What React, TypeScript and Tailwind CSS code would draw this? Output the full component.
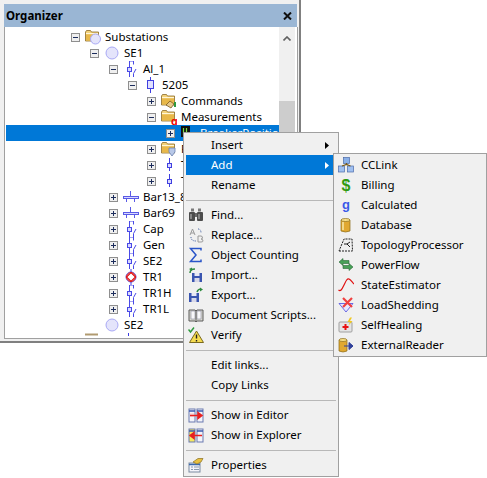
import type { ReactNode } from 'react';

const font = "[font-family:'Noto_Sans',sans-serif]";

function Ico({ children }: { children: ReactNode }) {
  return (
    <svg width="16" height="16" viewBox="0 0 16 16" className="shrink-0">
      {children}
    </svg>
  );
}

// tree icons
const Folder = () => (
  <>
    <path d="M0.5 3 L1.5 1.5 H5.5 L6.5 3 H13.5 V12 H0.5 Z" fill="#f3d27a" stroke="#8a6a28" strokeWidth="0.8" />
    <path d="M1 5.5 H13 V11.5 H1 Z" fill="#e8b84a" />
    <path d="M1 4.5 H13" stroke="#fff6d8" />
  </>
);
const Circle = ({ r = 6 }: { r?: number }) => (
  <circle cx="8" cy="8" r={r} fill="#e4e4fb" stroke="#a9a9f5" strokeWidth="1" />
);
const SwitchIcon = () => (
  <Ico>
    <path d="M6.5 0 H10.5 V3.5 M6.5 0 V6 M6.5 10 V16 M10.5 16 V12.5 L13 8" fill="none" stroke="#4a4ae6" strokeWidth="1" />
    <rect x="4.5" y="6.5" width="4" height="4" fill="#d8d8ff" stroke="#4a4ae6" />
  </Ico>
);
const BarIcon = () => (
  <Ico>
    <path d="M7.5 2 V7 M3.5 10 V13 M11.5 10 V13" stroke="#5a5ae6" fill="none" />
    <rect x="0.5" y="7.5" width="15" height="2" fill="#d8d8ff" stroke="#5a5ae6" strokeWidth="1" />
  </Ico>
);
const Stub = () => (
  <Ico>
    <path d="M8.5 1 V6 M8.5 10 V14" stroke="#4040e0" />
    <rect x="6.5" y="6.5" width="4" height="4" fill="#d8d8ff" stroke="#4040e0" />
  </Ico>
);

type Row = { pl: string; icon: ReactNode; label: string; open?: boolean; noBox?: boolean; sel?: boolean };

const rows: Row[] = [
  { pl: 'pl-[65px]', open: true, label: 'Substations', icon: <Ico><Folder /><circle cx="10.5" cy="10" r="5" fill="#e4e4fb" stroke="#a9a9f5" /></Ico> },
  { pl: 'pl-[84px]', open: true, label: 'SE1', icon: <Ico><Circle /></Ico> },
  { pl: 'pl-[103px]', open: true, label: 'Al_1', icon: <SwitchIcon /> },
  { pl: 'pl-[122px]', open: true, label: '5205', icon: <Ico><path d="M8.5 0 V3 M8.5 12 V16" stroke="#4040e0" /><rect x="5.5" y="3.5" width="6" height="8" fill="#e0e0ff" stroke="#4040e0" /></Ico> },
  { pl: 'pl-[141px]', label: 'Commands', icon: <Ico><Folder /><path d="M5 12 L9 8 L13 11 L10 15 Z" fill="#e8c88a" stroke="#7a5a20" strokeWidth="0.8" /><path d="M14 9 V14" stroke="#2f9a3f" strokeWidth="2" /></Ico> },
  { pl: 'pl-[141px]', open: true, label: 'Measurements', icon: <Ico><Folder /><text x="10" y="16" fontSize="11" fontWeight="700" fill="#f00000" fontFamily="Liberation Sans">g</text></Ico> },
  { pl: 'pl-[160px]', sel: true, label: 'BreakerPosition', icon: <Ico><rect x="1" y="1" width="9" height="11" fill="#101010" /><path d="M3.5 3 V10 M6.5 3 V10" stroke="#7de040" strokeWidth="1.2" /><path d="M11 8 H15" stroke="#f00000" strokeWidth="2" /></Ico> },
  { pl: 'pl-[141px]', label: 'F', icon: <Ico><Folder /><path d="M8 7 H14 V11 L11 15 L8 11 Z" fill="#b8c8e8" stroke="#6a80b0" strokeWidth="0.8" /></Ico> },
  { pl: 'pl-[141px]', label: 'T', icon: <Stub /> },
  { pl: 'pl-[141px]', label: 'T', icon: <Stub /> },
  { pl: 'pl-[103px]', label: 'Bar13_8', icon: <BarIcon /> },
  { pl: 'pl-[103px]', label: 'Bar69', icon: <BarIcon /> },
  { pl: 'pl-[103px]', label: 'Cap', icon: <SwitchIcon /> },
  { pl: 'pl-[103px]', label: 'Gen', icon: <SwitchIcon /> },
  { pl: 'pl-[103px]', label: 'SE2', icon: <SwitchIcon /> },
  { pl: 'pl-[103px]', label: 'TR1', icon: <Ico><path d="M8 0 V3 M8 13 V16" stroke="#3c3ce0" /><circle cx="8" cy="8" r="5" fill="#fff" stroke="#3c3ce0" strokeWidth="0.8" /><path d="M8 3.5 L12.5 8 L8 12.5 L3.5 8 Z" fill="none" stroke="#e01010" strokeWidth="1.2" /><circle cx="8" cy="8" r="4.5" fill="none" stroke="#e01010" strokeWidth="0.8" /></Ico> },
  { pl: 'pl-[103px]', label: 'TR1H', icon: <SwitchIcon /> },
  { pl: 'pl-[103px]', label: 'TR1L', icon: <SwitchIcon /> },
  { pl: 'pl-[84px]', noBox: true, label: 'SE2', icon: <Ico><Circle /></Ico> },
];

function Expander({ open }: { open?: boolean }) {
  return (
    <svg width="9" height="9" viewBox="0 0 9 9" className="shrink-0">
      <rect x="0.5" y="0.5" width="8" height="8" fill="#efefef" stroke="#8f8f8f" />
      <path d={open ? 'M2 4.5 H7' : 'M2 4.5 H7 M4.5 2 V7'} stroke="#1c2c5c" />
    </svg>
  );
}

function TreeRow({ row }: { row: Row }) {
  return (
    <div className={`h-4 shrink-0 flex items-center ${row.pl} ${row.sel ? 'bg-[#0078d7] text-white' : 'text-black'}`}>
      {row.noBox ? <span className="w-[9px] shrink-0" /> : <Expander open={row.open} />}
      <span className="ml-[5px]">{row.icon}</span>
      <span className="ml-1 whitespace-nowrap">{row.label}</span>
    </div>
  );
}

// menu icons
const icons: Record<string, ReactNode> = {
  find: <Ico><rect x="3" y="1.5" width="3" height="3" fill="#7a7a7a" /><rect x="10" y="1.5" width="3" height="3" fill="#7a7a7a" /><rect x="1" y="5" width="6" height="9" rx="1" fill="#4c4c4c" /><rect x="9" y="5" width="6" height="9" rx="1" fill="#4c4c4c" /><rect x="7" y="6" width="2" height="4" fill="#6a6a6a" /><path d="M3 7 V12 M11 7 V12" stroke="#c0c0c0" /></Ico>,
  replace: <Ico><path d="M2 8 L4.5 2 L7 8 M3 6 H6" fill="none" stroke="#9a9a9a" /><path d="M10 9 H13 Q14.5 9 14.5 11 Q14.5 12 13 12 Q15 12 15 14 Q15 15 13 15 H10 Z" fill="none" stroke="#9a9a9a" /><path d="M3 10 Q3 14 8 14 M10 2 Q13 2 13 6" fill="none" stroke="#3a5aa0" strokeDasharray="1 1" /></Ico>,
  sigma: <Ico><path d="M13 3.5 V1.5 H2.5 L8 8 L2.5 14.5 H13 V12.5" fill="none" stroke="#2a55c8" strokeWidth="1.5" /></Ico>,
  import: <Ico><path d="M4 6 H14 V15 H4 Z" fill="#3a55b0" /><rect x="6.5" y="6" width="5" height="3" fill="#e8e8f4" /><rect x="6.5" y="11" width="5" height="4" fill="#d8d8e8" /><path d="M2 6 Q2 2 7 2" fill="none" stroke="#2f8a3f" strokeWidth="1.5" /><path d="M1 2 L4 0.5 V4 Z" fill="#2f8a3f" /></Ico>,
  export: <Ico><path d="M1 6 H11 V15 H1 Z" fill="#3a55b0" /><rect x="3.5" y="6" width="5" height="3" fill="#e8e8f4" /><rect x="3.5" y="11" width="5" height="4" fill="#d8d8e8" /><path d="M9 5 Q10 2 13 2" fill="none" stroke="#2f8a3f" strokeWidth="1.5" /><path d="M12 0.5 L15 2.5 L12 4.5 Z" fill="#2f8a3f" /></Ico>,
  book: <Ico><path d="M1 3 H7 L8 4 L9 3 H15 V14 H9 L8 15 L7 14 H1 Z" fill="#d8d8d0" stroke="#5c5c5c" /><path d="M3 4 H7 V12 H3 Z M9 4 H13 V12 H9 Z" fill="#f8f8fa" stroke="#8a8aa0" strokeWidth="0.6" /><path d="M8 4 V15" stroke="#5c5c5c" /></Ico>,
  verify: <Ico><path d="M8.5 4 L15.5 15.5 H1.5 Z" fill="#f6dc50" stroke="#7a6a20" /><path d="M8.5 7.5 V11.5 M8.5 13 V14.5" stroke="#202020" strokeWidth="1.4" /><path d="M0.5 2.5 L2.5 5 L6 0.5" fill="none" stroke="#2e9a3e" strokeWidth="1.5" /></Ico>,
  editor: <Ico><rect x="1" y="2" width="6" height="13" fill="#f4f4fa" stroke="#6a7ab0" /><rect x="9" y="2" width="6" height="13" fill="#f4f4fa" stroke="#6a7ab0" /><path d="M1 4 H7 M9 4 H15" stroke="#3a5ab0" strokeWidth="1.5" /><rect x="2" y="6" width="4" height="4" fill="#f8dada" /><path d="M2 8.5 H11 M10 5.5 L14 8.5 L10 11.5 Z" fill="#e82020" stroke="#e82020" strokeWidth="1.5" /></Ico>,
  explorer: <Ico><rect x="1" y="2" width="6" height="13" fill="#f6e860" stroke="#6a7ab0" /><rect x="9" y="2" width="6" height="13" fill="#f4f4fa" stroke="#6a7ab0" /><path d="M1 4 H7 M9 4 H15" stroke="#3a5ab0" strokeWidth="1.5" /><path d="M14 8.5 H6 M6 5.5 L2 8.5 L6 11.5 Z" fill="#e82020" stroke="#e82020" strokeWidth="1.5" /></Ico>,
  props: <Ico><rect x="1" y="6" width="11" height="9" fill="#f4f4fa" stroke="#7a8aa0" /><path d="M1 7.5 H12" stroke="#3a6ab0" strokeWidth="1.5" /><path d="M3 10 H5 M6 10 H11 M3 12.5 H5 M6 12.5 H11" stroke="#8a9ab0" /><path d="M5 5 L10 1.5 H15 L13 5 L9 7 Z" fill="#e8c040" stroke="#8a7020" strokeWidth="0.7" /></Ico>,
  cclink: <Ico><rect x="5.5" y="0.5" width="6" height="6" fill="#8ab0e8" stroke="#4a6aa8" strokeWidth="0.7" /><rect x="0.5" y="9" width="6" height="6" fill="#a0c0f0" stroke="#4a6aa8" strokeWidth="0.7" /><rect x="9.5" y="9" width="6" height="6" fill="#a0c0f0" stroke="#4a6aa8" strokeWidth="0.7" /><path d="M8.5 6 V8 M4 9 L8.5 7.5 L12.5 9" fill="none" stroke="#7a5a18" strokeWidth="1.2" /></Ico>,
  billing: <Ico><text x="8" y="14" textAnchor="middle" fontSize="16" fontWeight="700" fill="#2f9a10" fontFamily="Liberation Sans">$</text></Ico>,
  calc: <Ico><text x="8" y="12" textAnchor="middle" fontSize="13" fontWeight="700" fill="#3a5ae8" fontFamily="Liberation Sans">g</text></Ico>,
  db: <Ico><path d="M3 3 H12 V14 Q7.5 16 3 14 Z" fill="#e0a830" stroke="#8a6a18" strokeWidth="0.7" /><ellipse cx="7.5" cy="3" rx="4.5" ry="1.5" fill="#f8e088" stroke="#8a6a18" strokeWidth="0.7" /><path d="M5 5 V13" stroke="#f8e8a8" strokeWidth="1.5" /></Ico>,
  topo: <Ico><path d="M1 14 H14.5 L14 2 H6 Z" fill="none" stroke="#202020" strokeDasharray="2 1" /><path d="M6 7 H9 L12 10 M9 7 L12 5" fill="none" stroke="#202020" /></Ico>,
  flow: <Ico><path d="M1 5 L5 1.5 V3.5 H11 V6.5 H5 V8.5 Z" fill="#48a058" stroke="#2a6a38" strokeWidth="0.6" /><path d="M15 10 L11 6.5 V8.5 H5 V11.5 H11 V13.5 Z" fill="#48a058" stroke="#2a6a38" strokeWidth="0.6" /></Ico>,
  state: <Ico><path d="M0.5 13 C3 15 4.5 11 6 8 S9 1 11 2 S14 5 16 7" fill="none" stroke="#e01010" strokeWidth="1.2" /></Ico>,
  shed: <Ico><path d="M1 6.5 H15 L8 15 Z" fill="#e8e8ff" stroke="#4a4ae0" strokeWidth="0.8" /><path d="M5 1 L14 10 M14 1 L5 10" stroke="#f04040" strokeWidth="2.2" /></Ico>,
  heal: <Ico><rect x="1" y="5" width="13" height="10" rx="1" fill="#e4e4e4" stroke="#a0a0a0" /><path d="M7.5 7 V13 M4.5 10 H10.5" stroke="#e81010" strokeWidth="2" /><path d="M12 0.5 L9.5 5 H12 L10.5 8.5 L14.5 4 H12 L14 0.5 Z" fill="#f0c820" /></Ico>,
  ext: <Ico><path d="M1 3 H9 V14 Q5 16 1 14 Z" fill="#e0a830" stroke="#8a6a18" strokeWidth="0.7" /><ellipse cx="5" cy="3" rx="4" ry="1.5" fill="#f8e088" stroke="#8a6a18" strokeWidth="0.7" /><path d="M6 9 H11 M11 5.5 L15 9 L11 12.5 Z" fill="#30409a" stroke="#30409a" /></Ico>,
};

type Item = { label?: string; icon?: string; arrow?: boolean; active?: boolean };

const mainItems: Item[] = [
  { label: 'Insert', arrow: true },
  { label: 'Add', arrow: true, active: true },
  { label: 'Rename' },
  {},
  { label: 'Find...', icon: 'find' },
  { label: 'Replace...', icon: 'replace' },
  { label: 'Object Counting', icon: 'sigma' },
  { label: 'Import...', icon: 'import' },
  { label: 'Export...', icon: 'export' },
  { label: 'Document Scripts...', icon: 'book' },
  { label: 'Verify', icon: 'verify' },
  {},
  { label: 'Edit links...' },
  { label: 'Copy Links' },
  {},
  { label: 'Show in Editor', icon: 'editor' },
  { label: 'Show in Explorer', icon: 'explorer' },
  {},
  { label: 'Properties', icon: 'props' },
];

const subItems: Item[] = [
  { label: 'CCLink', icon: 'cclink' },
  { label: 'Billing', icon: 'billing' },
  { label: 'Calculated', icon: 'calc' },
  { label: 'Database', icon: 'db' },
  { label: 'TopologyProcessor', icon: 'topo' },
  { label: 'PowerFlow', icon: 'flow' },
  { label: 'StateEstimator', icon: 'state' },
  { label: 'LoadShedding', icon: 'shed' },
  { label: 'SelfHealing', icon: 'heal' },
  { label: 'ExternalReader', icon: 'ext' },
];

function MenuRow({ item }: { item: Item }) {
  if (!item.label) {
    return (
      <div className="h-[10px] flex items-center">
        <div className="h-px w-full bg-[#b8b8b8]" />
      </div>
    );
  }
  return (
    <div className={`h-5 flex items-center pl-[2px] ${item.active ? 'bg-[#0078d7] text-white' : 'text-black'}`}>
      <span className="w-4 h-4 shrink-0">{item.icon && icons[item.icon]}</span>
      <span className="ml-[7px] whitespace-nowrap flex-1">{item.label}</span>
      {item.arrow && (
        <svg width="4" height="7" viewBox="0 0 4 7" className={`mr-[7px] ${item.active ? 'fill-white' : 'fill-black'}`}>
          <path d="M0 0 L4 3.5 L0 7 Z" />
        </svg>
      )}
    </div>
  );
}

export default function App() {
  return (
    <div className={`relative w-[487px] h-[478px] overflow-hidden bg-white text-[11.5px] leading-4 ${font}`}>
      {/* Organizer panel */}
      <div className="w-[301px] h-[343px] bg-[#f0f0f0] border-r-2 border-b-2 border-[#808080] pt-1 pl-1 pr-px pb-[2px] flex flex-col">
        <div className="h-[23px] shrink-0 mr-px bg-[#9ab6d4] flex items-center justify-between pl-[2px] pr-[5px]">
          <span className="font-bold text-black">Organizer</span>
          <svg width="9" height="8" viewBox="0 0 9 8">
            <path d="M1 0.5 L8 7.5 M8 0.5 L1 7.5" stroke="#101010" strokeWidth="2" />
          </svg>
        </div>
        <div className="flex-1 min-h-0 flex bg-white border-l border-b border-r border-[#a0a0a0] pl-px pr-[2px] overflow-hidden">
          <div className="flex-1 min-w-0 pt-[2px] flex flex-col overflow-hidden">
            {rows.map((row, i) => (
              <TreeRow key={i} row={row} />
            ))}
            <div className="h-4 shrink-0 flex items-start pl-[79px]">
              <svg width="56" height="16" viewBox="0 0 56 16">
                <path d="M0 1.5 H13" stroke="#b09a70" strokeWidth="2" />
                <path d="M43.5 0 V3" stroke="#3c3ce0" />
              </svg>
            </div>
          </div>
          <div className="w-4 shrink-0 bg-[#f0f0f0] flex flex-col">
            <div className="h-[17px] flex items-center justify-center pt-[5px]">
              <svg width="8" height="5" viewBox="0 0 8 5">
                <path d="M0.5 4.5 L4 1 L7.5 4.5" fill="none" stroke="#606060" strokeWidth="1.6" />
              </svg>
            </div>
            <div className="mt-[57px] h-[70px] bg-[#cdcdcd]" />
          </div>
        </div>
      </div>

      {/* Context menu */}
      <div className="absolute left-[183px] top-[132px] w-[156px] h-[345px] bg-[#f0f0f0] border border-[#a0a0a0] p-[2px]">
        {mainItems.map((item, i) => (
          <MenuRow key={i} item={item} />
        ))}
      </div>

      {/* Add submenu */}
      <div className="absolute left-[333px] top-[153px] w-[154px] h-[204px] bg-[#f0f0f0] border border-[#a0a0a0] py-px pl-[2px]">
        {subItems.map((item) => (
          <MenuRow key={item.label} item={item} />
        ))}
      </div>
    </div>
  );
}
